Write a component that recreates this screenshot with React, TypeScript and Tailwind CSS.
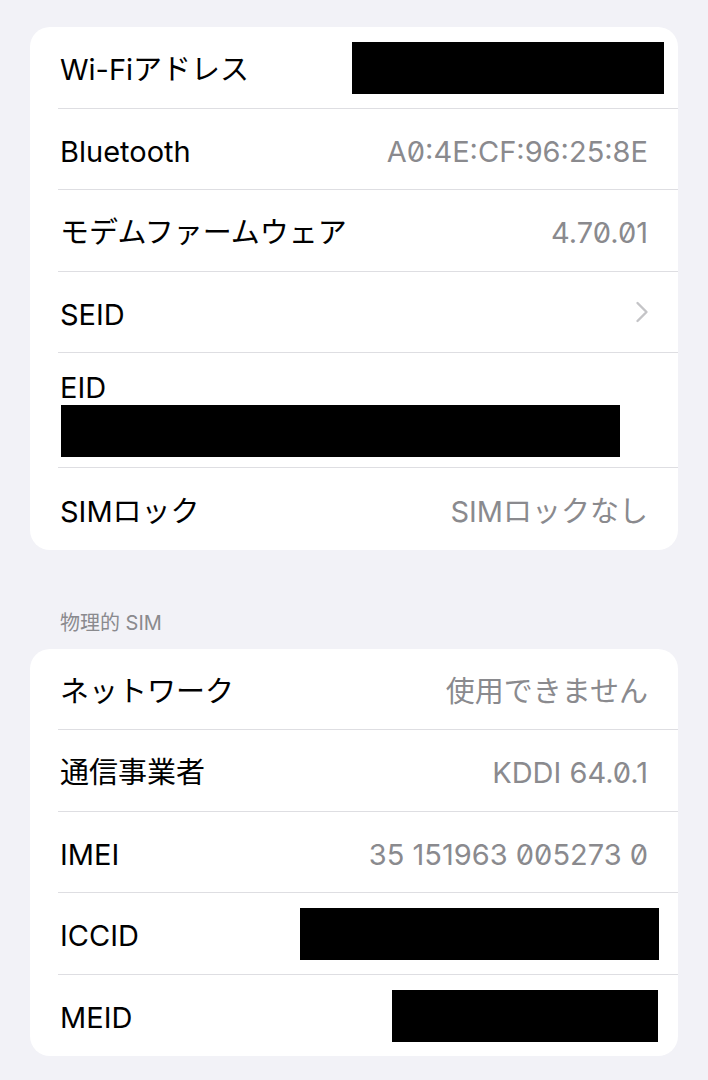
import React from 'react';

const font = { fontFamily: 'Inter, "Noto Sans CJK JP", sans-serif' };

type Row = { label: string; value?: string; redact?: string; chevron?: boolean };

function Redact({ className }: { className: string }) {
  return <div className={`bg-black ${className}`} />;
}

function Chevron() {
  return (
    <svg width="14" height="22" viewBox="0 0 14 22" fill="none" className="mr-[-1px] mt-[-4px]">
      <path d="M2.5 2 L11.5 11 L2.5 20" stroke="#c4c4c7" strokeWidth="2.4" strokeLinecap="round" strokeLinejoin="round" />
    </svg>
  );
}

function InfoRow({ row, last }: { row: Row; last?: boolean }) {
  return (
    <div className={`flex h-[81.5px] items-center justify-between pr-[30px] pt-[5px] ${last ? '' : 'border-b border-[#dedee2]'}`}>
      <span className="pl-[2px] text-[29px] text-black">{row.label}</span>
      {row.value && <span className="slashed-zero text-[29px] text-[#8a8a8e]">{row.value}</span>}
      {row.chevron && <Chevron />}
      {row.redact === 'wifi' && <Redact className="mr-[-16px] mt-[-3px] h-[52px] w-[312px]" />}
      {row.redact === 'iccid' && <Redact className="mr-[-11px] mt-[-3px] h-[52px] w-[359px]" />}
      {row.redact === 'meid' && <Redact className="mr-[-10px] mt-[-3px] h-[52px] w-[266px]" />}
    </div>
  );
}

export default function App() {
  return (
    <div className="min-h-screen bg-[#f2f2f7] px-[30px] pt-[27px] pb-[23px]" style={font}>
      <div className="rounded-[20px] bg-white pl-[28px]">
        <InfoRow row={{ label: 'Wi-Fiアドレス', redact: 'wifi' }} />
        <InfoRow row={{ label: 'Bluetooth', value: 'A0:4E:CF:96:25:8E' }} />
        <InfoRow row={{ label: 'モデムファームウェア', value: '4.70.01' }} />
        <InfoRow row={{ label: 'SEID', chevron: true }} />
        <div className="flex h-[115px] flex-col border-b border-[#dedee2] pt-[19px]">
          <span className="pl-[2px] text-[29px] leading-[32px] text-black">EID</span>
          <Redact className="ml-[3px] mt-[1px] h-[52px] w-[559px]" />
        </div>
        <InfoRow row={{ label: 'SIMロック', value: 'SIMロックなし' }} last />
      </div>

      <div className="mt-[61px] mb-[14px] pl-[30px] text-[20px] leading-[24px] text-[#8a8a8e]">物理的 SIM</div>

      <div className="rounded-[20px] bg-white pl-[28px]">
        <InfoRow row={{ label: 'ネットワーク', value: '使用できません' }} />
        <InfoRow row={{ label: '通信事業者', value: 'KDDI 64.0.1' }} />
        <InfoRow row={{ label: 'IMEI', value: '35 151963 005273 0' }} />
        <InfoRow row={{ label: 'ICCID', redact: 'iccid' }} />
        <InfoRow row={{ label: 'MEID', redact: 'meid' }} last />
      </div>
    </div>
  );
}
